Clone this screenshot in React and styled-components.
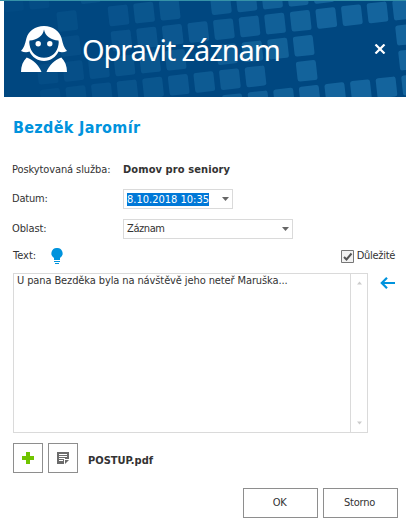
import React from 'react'
import styled, { createGlobalStyle } from 'styled-components'

const GlobalStyle = createGlobalStyle`
  * {
    box-sizing: border-box;
  }
  body {
    margin: 0;
    background: #fff;
    color: #333;
    font-family: 'DejaVu Sans Condensed', 'DejaVu Sans', sans-serif;
    font-stretch: condensed;
    font-size: 11px;
    line-height: 14px;
  }
  button {
    font: inherit;
    color: inherit;
    padding: 0;
  }
`

const Window = styled.div`
  width: 406px;
  height: 528px;
  border-top: 1px solid #3592a8;
  display: flex;
  flex-direction: column;
`

const Header = styled.header`
  position: relative;
  height: 96px;
  margin-left: 4px;
  padding: 0 20px 0 17px;
  display: flex;
  align-items: center;
  background: #004780;
  color: #fff;
  overflow: hidden;
`

const Pattern = styled.svg`
  position: absolute;
  inset: 0;
`

const Avatar = styled.svg`
  position: relative;
  flex: none;
`

const Title = styled.h1`
  position: relative;
  margin: 2px auto 0 15px;
  font: 400 29px/40px 'Noto Sans', sans-serif;
  white-space: nowrap;
  letter-spacing: -1.1px;
`

const Close = styled.button`
  position: relative;
  display: flex;
  border: 0;
  background: none;
`

const Body = styled.main`
  padding: 20px 8px 0 13px;
`

const Name = styled.h2`
  margin: 0 0 22px;
  font-size: 16px;
  line-height: 22px;
  color: #0093dd;
`

const Text = styled.span`
  white-space: nowrap;
  letter-spacing: ${p => p.$spacing || 0}px;
  font-weight: ${p => (p.$bold ? 'bold' : 'normal')};
`

const Row = styled.div`
  display: grid;
  grid-template-columns: 110px 1fr;
  align-items: center;
  height: ${p => p.$height}px;
`

const Label = styled(Text)`
  margin-left: -1px;
`

const Field = styled.div`
  display: flex;
  align-items: center;
  justify-content: space-between;
  width: ${p => p.$width}px;
  height: 20px;
  padding: 0 3px;
  border: 1px solid #dadada;
`

const Selected = styled(Text)`
  height: 13px;
  line-height: 13px;
  width: 82px;
  background: #0078d7;
  color: #fff;
`

const TextHeader = styled.div`
  display: flex;
  align-items: center;
  height: 34px;
`

const Bulb = styled.svg`
  margin: 0 0 1px 15px;
`

const Important = styled.label`
  display: flex;
  align-items: center;
  gap: 3px;
  margin: 0 3px 0 auto;
`

const Editor = styled.div`
  display: flex;
  gap: 12px;
`

const TextArea = styled.div`
  display: flex;
  justify-content: space-between;
  width: 355px;
  height: 160px;
  padding-left: 3px;
  border: 1px solid #dadada;
`

const ScrollBar = styled.div`
  display: flex;
  flex-direction: column;
  justify-content: space-between;
  align-items: center;
  width: 17px;
  padding: 7px 0;
  border-left: 1px solid #dadada;
`

const Arrow = styled.svg`
  margin-top: 4px;
`

const Attachments = styled.div`
  display: flex;
  align-items: center;
  gap: 5px;
  margin-top: 10px;
`

const Button = styled.button`
  display: flex;
  align-items: center;
  justify-content: center;
  width: ${p => p.$width}px;
  height: 30px;
  border: 1px solid #8e8e8e;
  background: #fff;
`

const FileName = styled(Text)`
  margin: 5px 0 0 5px;
`

const Footer = styled.footer`
  display: flex;
  justify-content: flex-end;
  gap: 5px;
  margin-top: 15px;

  ${Button} {
    padding-right: 2px;
  }
`

// Columns of the tilted header grid that are filled, by row.
const tiles = {
  '-2': [-11, -10, -8],
  '-1': [-9, -7, -6, -5, -3, -2, -1, 0, 1],
  0: [-9, -7, -6, -5, -4, -3, -2, -1, 0, 1, 2, 3, 4],
  1: [-10, -9, -8, -7, -6, -5, -3, -2, -1, 0, 4],
  2: [-10, -9, -8, -7, -6, -5, -4, -3, -2, 0, 4],
  3: [-3, -2, -1, 0, 1, 2, 3, 4],
}

const HeaderPattern = () => (
  <Pattern width="402" height="96">
    {Object.entries(tiles).map(([row, cols]) =>
      cols.map(col => {
        const x = 296.7 + 25.6 * col + 3 * row
        const y = 19.8 - 2.8 * col + 25 * row
        return (
          <rect
            key={`${row}/${col}`}
            x="-10"
            y="-10"
            width="20"
            height="20"
            rx="2.5"
            fill="#1c70a7"
            opacity={Math.min(0.72, 0.06 + x / 480)}
            transform={`translate(${x} ${y}) rotate(-6.3)`}
          />
        )
      }),
    )}
  </Pattern>
)

const Caret = ({ up, color = '#666', size = 7 }) => (
  <svg width={size} height="4" viewBox="0 0 7 4">
    <path d={up ? 'M0 4L3.5 0 7 4z' : 'M0 0h7L3.5 4z'} fill={color} />
  </svg>
)

const App = () => (
  <>
    <GlobalStyle />
    <Window>
      <Header>
        <HeaderPattern />
        <Avatar width="46" height="46" viewBox="0 0 46 46" fill="#fff">
          <path
            fillRule="evenodd"
            d="M23 0C14 0 7.500 5 5.500 12 4 18 3 22 0 25c3 1.500 6 1.800 8.500.5C11 31 16.500 35 23 35s12-4 14.500-9.500c2.500 1.300 5.500 1 8.500-.5-3-3-4-7-5.500-13C38.500 5 32 0 23 0zM23 3.500C24 10 30 14 37.500 14.500c.3 1.300.3 2.600 0 4C36.500 26 31 31.700 23 31.700S9.500 26 8.500 18.500c-.3-1.400-.3-2.700 0-4C16 14 22 10 23 3.500z"
          />
          <circle cx="17.200" cy="17.800" r="2.7" />
          <circle cx="28.800" cy="17.800" r="2.7" />
          <path d="M0 46c0-6 2-11 5.700-14.500C12 34 18 39 20.500 46zM46 46c0-6-2-11-5.700-14.500C34 34 28 39 25.500 46z" />
        </Avatar>
        <Title>Opravit záznam</Title>
        <Close aria-label="Zavřít">
          <svg width="12" height="10" viewBox="0 0 12 10" stroke="#fff" strokeWidth="2.2">
            <path d="M1.5.5l9 9M10.500.5l-9 9" />
          </svg>
        </Close>
      </Header>
      <Body>
        <Name>
          <Text $bold $spacing={0.32}>Bezděk Jaromír</Text>
        </Name>
        <Row $height={18}>
          <Label $spacing={-0.1}>Poskytovaná služba:</Label>
          <Text $bold $spacing={0.1}>Domov pro seniory</Text>
        </Row>
        <Row $height={40}>
          <Label $spacing={-0.2}>Datum:</Label>
          <Field $width={110}>
            <Selected>8.10.2018 10:35</Selected>
            <Caret />
          </Field>
        </Row>
        <Row $height={20}>
          <Label $spacing={-0.1}>Oblast:</Label>
          <Field $width={170}>
            <Text $spacing={-0.4}>Záznam</Text>
            <Caret />
          </Field>
        </Row>
        <TextHeader>
          <Text>Text:</Text>
          <Bulb width="12" height="16" viewBox="0 0 12 16" fill="#0093dd">
            <path d="M6 0a5.400 5.400 0 0 0-3 10v2h6v-2A5.400 5.400 0 0 0 6 0zM3 13h6v1H3zM4 15h4v1H4z" />
          </Bulb>
          <Important>
            <svg width="13" height="13" viewBox="0 0 13 13" fill="none">
              <path d="M.5.5h12v12H.5z" fill="#f2f2f2" stroke="#777" />
              <path d="M3 7l2.500 2.500L10.500 3.500" stroke="#555" strokeWidth="2" />
            </svg>
            <Text $spacing={-0.3}>Důležité</Text>
          </Important>
        </TextHeader>
        <Editor>
          <TextArea>
            <Text $spacing={-0.11}>U pana Bezděka byla na návštěvě jeho neteř Maruška...</Text>
            <ScrollBar>
              <Caret up color="#ccc" size={5} />
              <Caret color="#ccc" size={5} />
            </ScrollBar>
          </TextArea>
          <Arrow width="15" height="12" viewBox="0 0 15 12" fill="none" stroke="#0093dd" strokeWidth="2.2">
            <path d="M15 6H2M7 .8L1.800 6 7 11.200" />
          </Arrow>
        </Editor>
        <Attachments>
          <Button $width={30} aria-label="Přidat">
            <svg width="12" height="12" fill="#70c400">
              <path d="M4 0h4v4h4v4H8v4H4V8H0V4h4z" />
            </svg>
          </Button>
          <Button $width={30} aria-label="Poznámka">
            <svg width="12" height="12" fill="#6b6b6b">
              <path fillRule="evenodd" d="M0 0h12v7H7v5H0zM2 2v1h8V2zM2 4v1h8V4zM2 6v1h6V6zM2 8v1h4V8zM8 8h4L8 12z" />
            </svg>
          </Button>
          <FileName $bold>POSTUP.pdf</FileName>
        </Attachments>
        <Footer>
          <Button $width={75}>
            <Text $spacing={-0.3}>OK</Text>
          </Button>
          <Button $width={75}>
            <Text $spacing={-0.2}>Storno</Text>
          </Button>
        </Footer>
      </Body>
    </Window>
  </>
)

export default App
